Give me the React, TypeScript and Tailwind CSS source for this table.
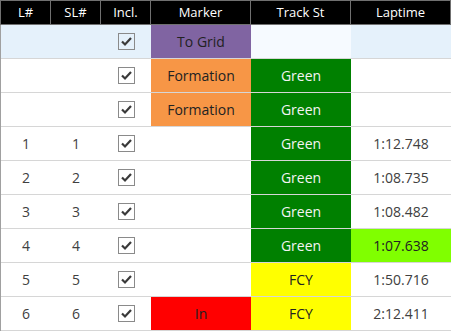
import React from "react";

type Row = {
  lap: string;
  sl: string;
  marker?: { text: string; bg: string };
  track?: { text: string; bg: string; fg: string };
  laptime: string;
  best?: boolean;
  selected?: boolean;
};

const GREEN = { text: "Green", bg: "bg-[#008000]", fg: "text-[#f4f4f4]" };
const FCY = { text: "FCY", bg: "bg-[#ffff00]", fg: "text-[#222]" };

const ROWS: Row[] = [
  { lap: "", sl: "", marker: { text: "To Grid", bg: "bg-[#8064a2]" }, laptime: "", selected: true },
  { lap: "", sl: "", marker: { text: "Formation", bg: "bg-[#f79646]" }, track: GREEN, laptime: "" },
  { lap: "", sl: "", marker: { text: "Formation", bg: "bg-[#f79646]" }, track: GREEN, laptime: "" },
  { lap: "1", sl: "1", track: GREEN, laptime: "1:12.748" },
  { lap: "2", sl: "2", track: GREEN, laptime: "1:08.735" },
  { lap: "3", sl: "3", track: GREEN, laptime: "1:08.482" },
  { lap: "4", sl: "4", track: GREEN, laptime: "1:07.638", best: true },
  { lap: "5", sl: "5", track: FCY, laptime: "1:50.716" },
  { lap: "6", sl: "6", marker: { text: "In", bg: "bg-[#ff0000]" }, track: FCY, laptime: "2:12.411" },
];

const HEADERS = [
  { label: "L#", w: "w-[50px]" },
  { label: "SL#", w: "w-[50px]" },
  { label: "Incl.", w: "w-[50px]" },
  { label: "Marker", w: "w-[100px]" },
  { label: "Track St", w: "w-[100px]" },
  { label: "Laptime", w: "w-[101px] border-r" },
];

export default function App() {
  return (
    <div
      className="w-[451px] h-[332px] bg-white overflow-hidden text-[14px] text-[#404040]"
      style={{ fontFamily: '"Open Sans", "Noto Sans", sans-serif' }}
    >
      {/* header */}
      <div className="flex h-[25px] bg-black">
        {HEADERS.map((h) => (
          <div
            key={h.label}
            className={`${h.w} h-full border-l border-t border-b border-[#707070] flex items-center justify-center text-white text-[13px]`}
          >
            {h.label}
          </div>
        ))}
      </div>

      {/* rows */}
      <div className="border-l border-[#a0a0a0]">
        {ROWS.map((r, i) => (
          <div
            key={i}
            className={`flex h-[34px] border-b border-[#d6d6d6] ${r.selected ? "bg-[#e5f1fb]" : "bg-white"}`}
          >
            <div className="w-[50px] flex items-center justify-center">{r.lap}</div>
            <div className="w-[50px] flex items-center justify-center">{r.sl}</div>
            <div className="w-[50px] flex items-center justify-center">
              <CheckBox />
            </div>
            <div
              className={`w-[100px] flex items-center justify-center text-[#222] ${r.marker ? r.marker.bg : ""}`}
            >
              {r.marker?.text}
            </div>
            <div
              className={`w-[100px] flex items-center justify-center ${
                r.track ? `${r.track.bg} ${r.track.fg}` : r.selected ? "bg-[#f6faff]" : ""
              }`}
            >
              {r.track?.text}
            </div>
            <div
              className={`w-[100px] flex items-center justify-center ${r.best ? "bg-[#80ff00] text-[#222]" : ""}`}
            >
              {r.laptime}
            </div>
          </div>
        ))}
      </div>
    </div>
  );
}

function CheckBox() {
  return (
    <div className="w-[17px] h-[17px] border border-[#8a8a8a] bg-transparent flex items-center justify-center">
      <svg width="15" height="15" viewBox="0 0 15 15">
        <path d="M3 7.5 L6 10.5 L12 4" fill="none" stroke="#3a3a3a" strokeWidth="2.2" />
      </svg>
    </div>
  );
}
